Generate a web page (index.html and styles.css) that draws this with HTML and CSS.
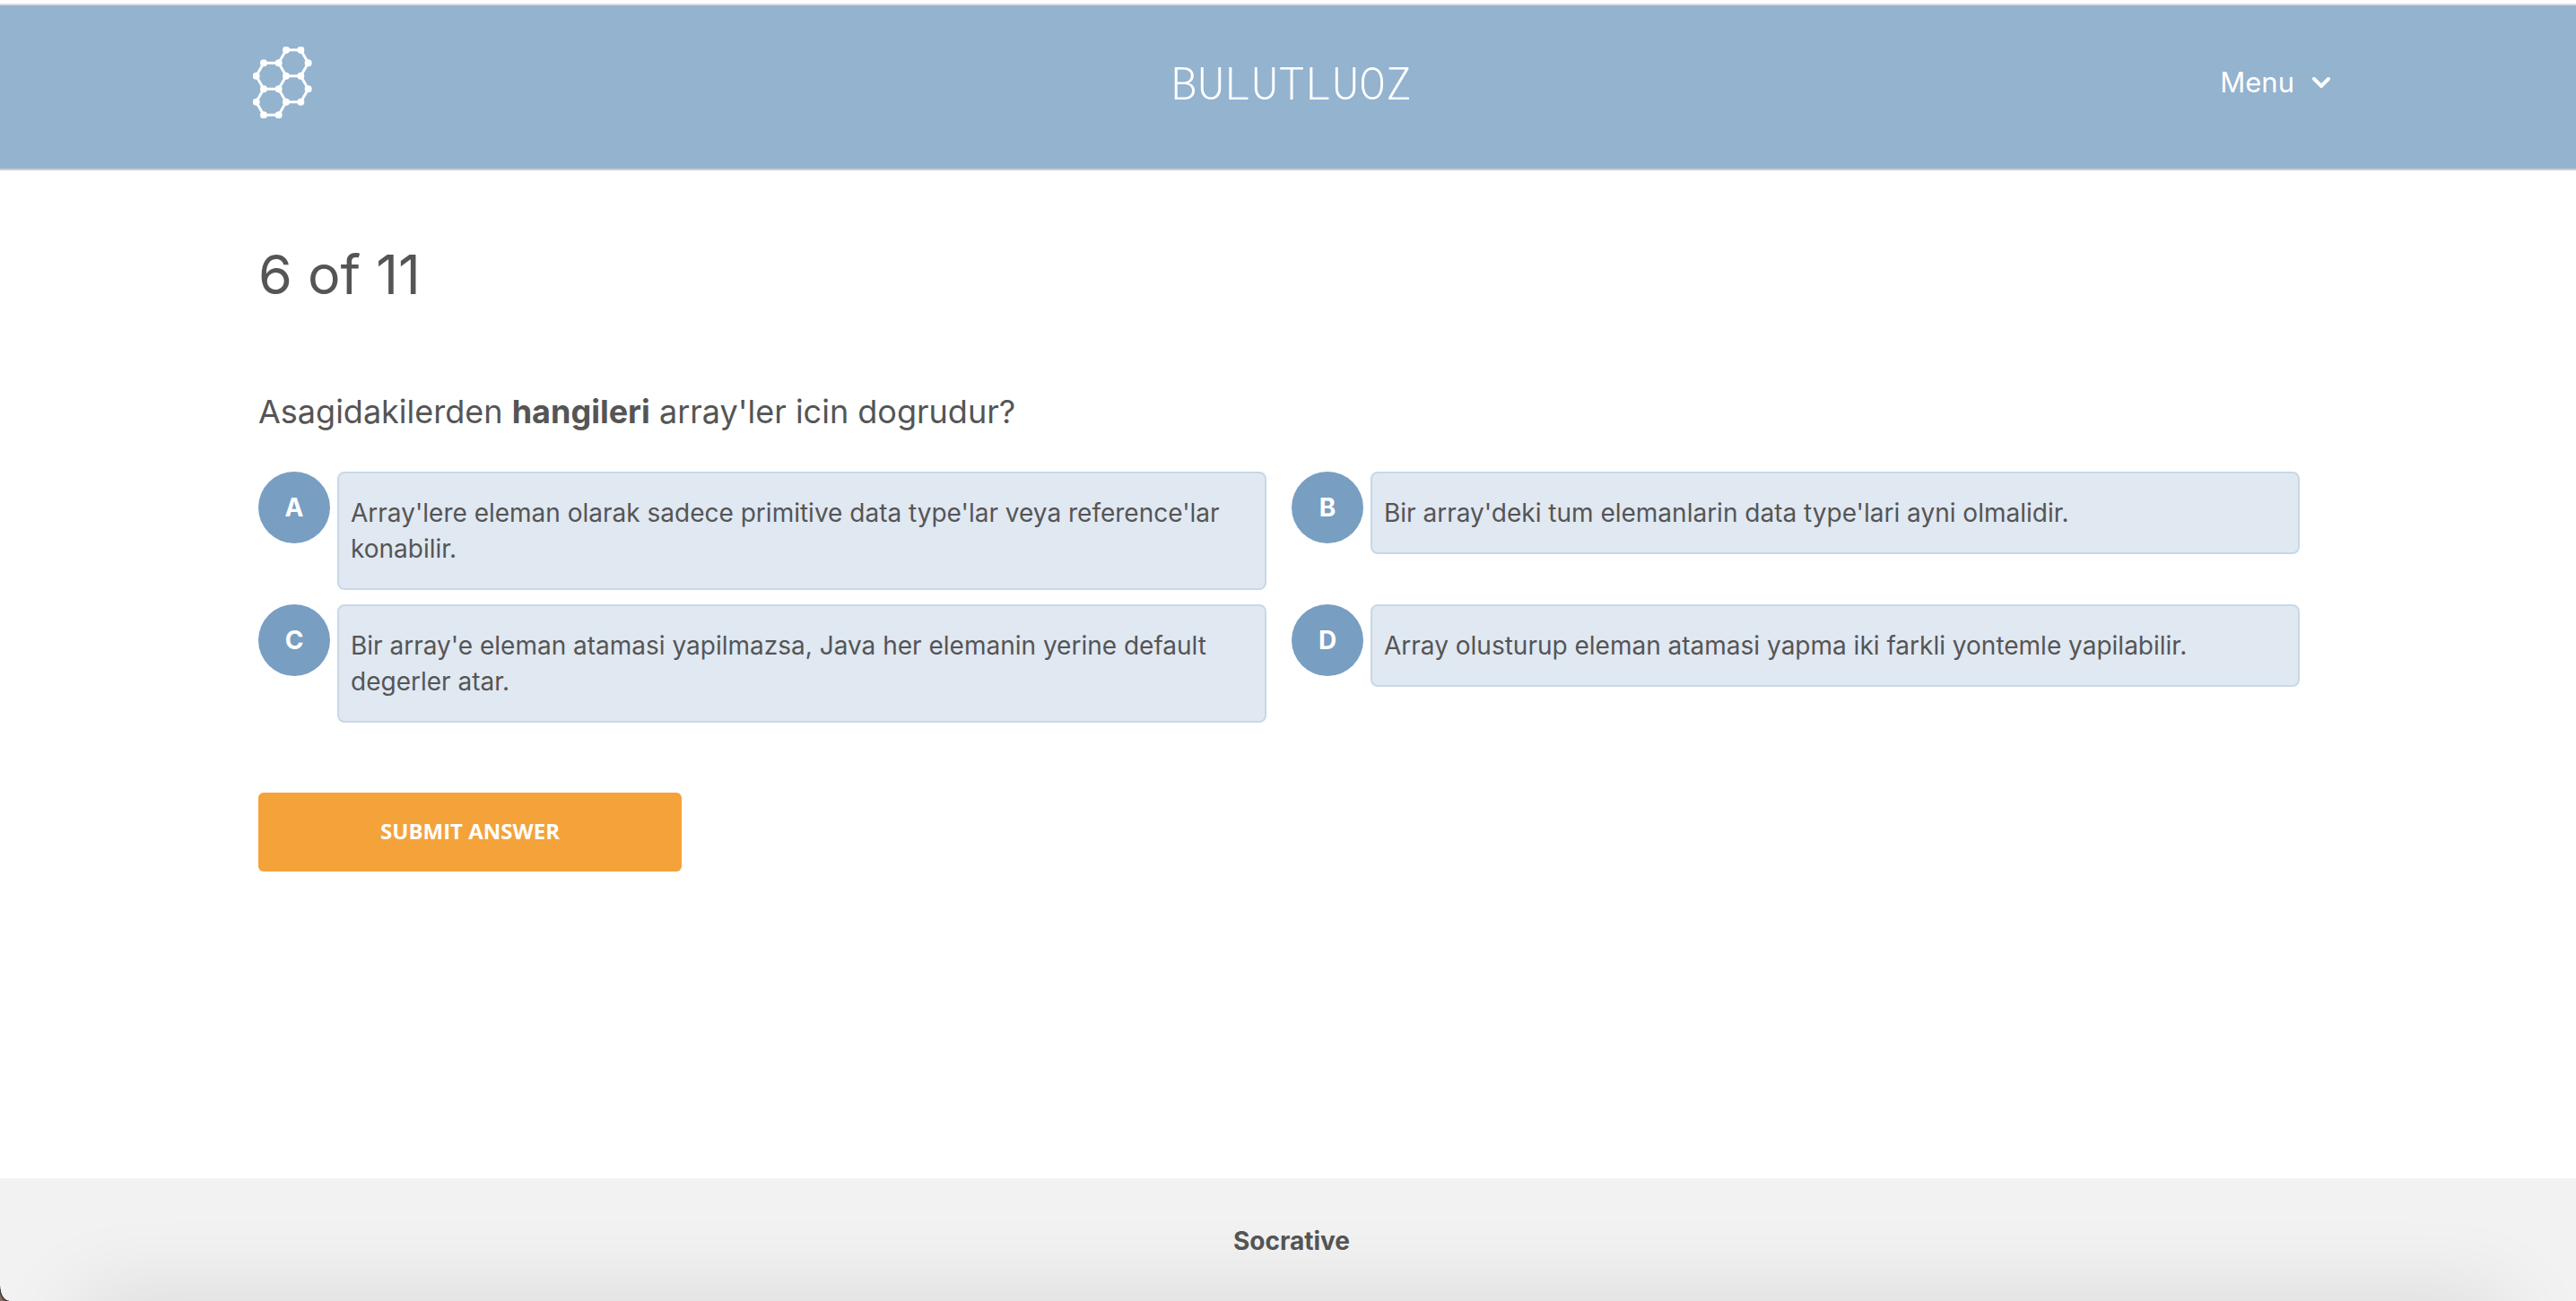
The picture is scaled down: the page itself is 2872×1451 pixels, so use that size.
FILE: index.html
```html
<!DOCTYPE html>
<html lang="tr">
<head>
<meta charset="utf-8">
<title>Socrative</title>
<link rel="stylesheet" href="styles.css">
</head>
<body>
<header class="header">
  <a class="logo" href="#" aria-label="Home">
    <svg width="66" height="80" viewBox="66 66 198 240" aria-hidden="true">
      <path fill="none" stroke="#fff" stroke-width="9" d="M177 77H226L251 121L226 164H177L152 121ZM152 121H102L77 164L102 208H152L177 164M226 164L251 208L226 251H177L152 208M102 208L77 251L102 295H152L177 251"/>
      <g fill="#fff">
        <circle cx="177" cy="77" r="12"/><circle cx="226" cy="77" r="12"/>
        <circle cx="251" cy="121" r="12"/><circle cx="226" cy="164" r="12"/>
        <circle cx="177" cy="164" r="12"/><circle cx="152" cy="121" r="12"/>
        <circle cx="102" cy="121" r="12"/><circle cx="77" cy="164" r="12"/>
        <circle cx="102" cy="208" r="12"/><circle cx="152" cy="208" r="12"/>
        <circle cx="251" cy="208" r="12"/><circle cx="226" cy="251" r="12"/>
        <circle cx="177" cy="251" r="12"/><circle cx="77" cy="251" r="12"/>
        <circle cx="102" cy="295" r="12"/><circle cx="152" cy="295" r="12"/>
      </g>
    </svg>
  </a>
  <div class="room">BULUTLUOZ</div>
  <button class="menu" type="button">Menu
    <svg width="20" height="12" viewBox="0 0 20 12" aria-hidden="true"><path d="M2 2L10 10L18 2" fill="none" stroke="#fff" stroke-width="4" stroke-linecap="round"/></svg>
  </button>
</header>
<main class="quiz">
  <h1 class="progress">6 of 11</h1>
  <p class="question">Asagidakilerden <b>hangileri</b> array'ler icin dogrudur?</p>
  <div class="options">
    <button class="option" type="button"><span class="letter">A</span><span class="answer">Array'lere eleman olarak sadece primitive data type'lar veya reference'lar konabilir.</span></button>
    <button class="option" type="button"><span class="letter">B</span><span class="answer">Bir array'deki tum elemanlarin data type'lari ayni olmalidir.</span></button>
    <button class="option" type="button"><span class="letter">C</span><span class="answer">Bir array'e eleman atamasi yapilmazsa, Java her elemanin yerine default degerler atar.</span></button>
    <button class="option" type="button"><span class="letter">D</span><span class="answer">Array olusturup eleman atamasi yapma iki farkli yontemle yapilabilir.</span></button>
  </div>
  <button class="submit" type="button">SUBMIT ANSWER</button>
</main>
<footer class="footer">Socrative</footer>
</body>
</html>
```

FILE: styles.css
```css
* { box-sizing: border-box; }

body {
  margin: 0;
  min-height: 100vh;
  display: flex;
  flex-direction: column;
  background: #fff;
  color: #555;
  font-family: Inter, "Liberation Sans", sans-serif;
}

button {
  border: 0;
  padding: 0;
  background: none;
  color: inherit;
  font: inherit;
  cursor: pointer;
}

.header {
  display: grid;
  grid-template-columns: 1fr auto 1fr;
  align-items: start;
  margin-top: 4px;
  padding: 46px 274px 56px 282px;
  border-top: 2px solid #ddd;
  border-bottom: 2px solid #ccc;
  background: #93b3cf;
  color: #fff;
}

.logo { justify-self: start; }
.logo svg { display: block; }

.room {
  font: 350 50px/80px "Roboto Mono", Roboto, sans-serif;
}

.menu {
  display: flex;
  align-items: center;
  justify-self: end;
  gap: 20px;
  font-size: 31px;
  line-height: 80px;
}

.quiz {
  flex: 1;
  padding: 76px 308px 80px 288px;
}

.progress {
  margin: 0;
  font-size: 61px;
  font-weight: 400;
  line-height: 80px;
}

.question {
  margin: 87px 0 41px;
  font-size: 36px;
  line-height: 52px;
}

.options {
  display: grid;
  grid-template-columns: 1fr 1fr;
  align-items: start;
  gap: 16px 28px;
}

.option {
  display: flex;
  align-items: flex-start;
  gap: 8px;
  text-align: left;
  font-size: 28px;
}

.letter {
  flex: none;
  width: 80px;
  border-radius: 50%;
  background: #789ec2;
  color: #fff;
  font-weight: 700;
  line-height: 80px;
  text-align: center;
}

.answer {
  flex: 1;
  padding: 24px 13px;
  border: 2px solid #c8d8e7;
  border-radius: 8px;
  background: #e0e8f2;
  line-height: 40px;
}

.submit {
  display: block;
  width: 472px;
  margin-top: 78px;
  padding-bottom: 2px;
  border-radius: 6px;
  background: #f4a23a;
  color: #fff;
  font: 700 24px/86px "Open Sans", sans-serif;
}

.footer {
  position: relative;
  overflow: hidden;
  padding: 50px 0 47px 8px;
  background: #f2f2f2;
  font-size: 28px;
  font-weight: 700;
  line-height: 40px;
  text-align: center;
}

/* soft shade rising from the bottom edge */
.footer::after {
  content: "";
  position: absolute;
  top: 100%;
  left: 90px;
  right: 80px;
  height: 80px;
  box-shadow: 0 0 100px rgba(0, 0, 0, .12);
}

/* rounded bottom-left corner of the window */
.footer::before {
  content: "";
  position: absolute;
  left: 0;
  bottom: 0;
  width: 10px;
  height: 17px;
  background: radial-gradient(ellipse 10px 17px at 100% 0, transparent 94%, #3c3232 100%, #8a6c62 120%);
}
```
